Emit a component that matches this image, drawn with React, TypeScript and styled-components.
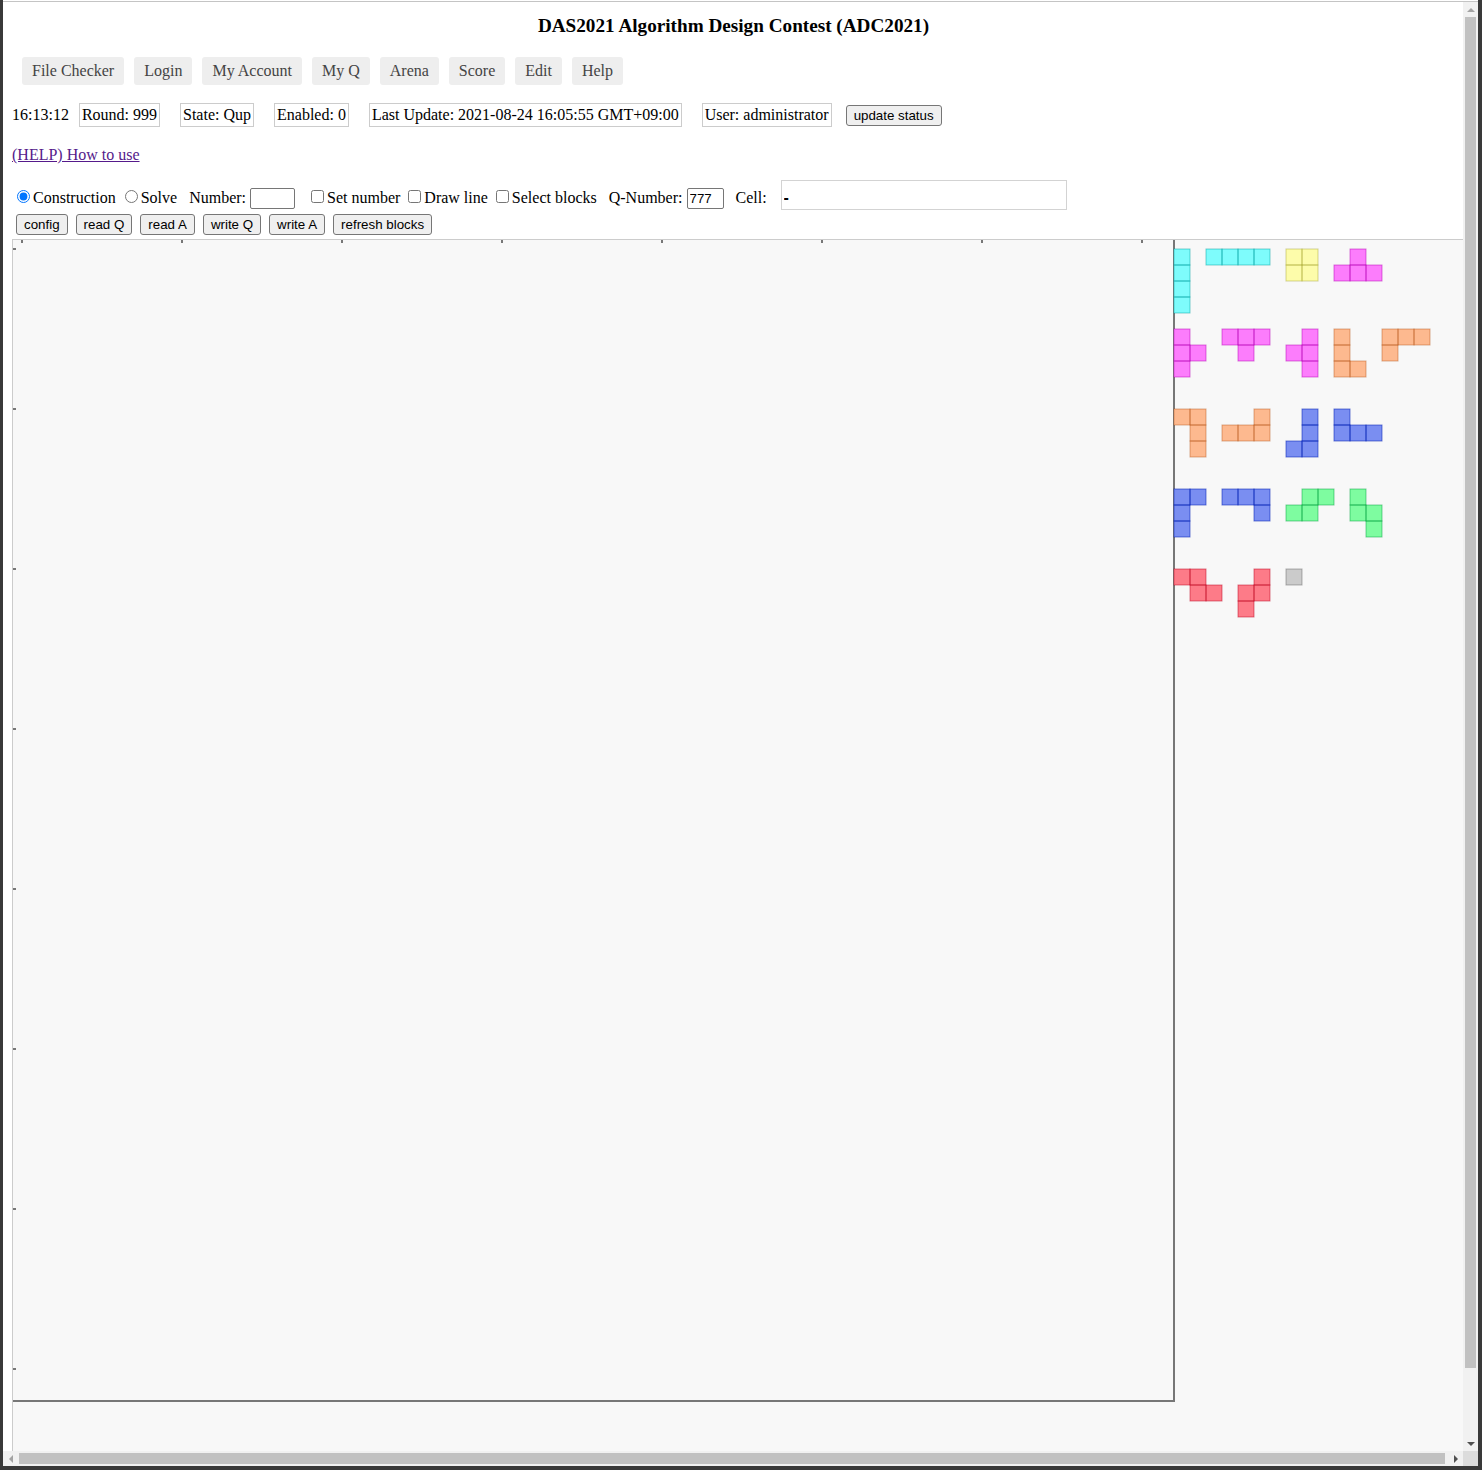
import React from "react";
import styled, { createGlobalStyle } from "styled-components";

const GlobalStyle = createGlobalStyle`
  html, body {
    margin: 0;
    padding: 0;
    overflow: hidden;
    background: #393939;
  }
  #root {
    width: 1482px;
    height: 1470px;
  }
`;

const Frame = styled.div`
  margin-left: 3px;
  width: 1475px;
  height: 1466px;
  padding-top: 1px;
  box-sizing: border-box;
  background: #ffffff;
`;

const Window = styled.div`
  height: 1465px;
  box-sizing: border-box;
  border-top: 1px solid #c4c4c4;
  display: grid;
  grid-template-columns: 1460px 15px;
  grid-template-rows: 1449px 15px;
`;

const Viewport = styled.div`
  overflow: hidden;
  background: #ffffff;
  font-family: "Liberation Serif", "Times New Roman", serif;
  font-size: 16px;
  color: #000;
`;

const VBar = styled.div`
  background: #f1f1f1;
  display: flex;
  flex-direction: column;
`;

const HBar = styled.div`
  background: #f1f1f1;
  display: flex;
  flex-direction: row;
`;

const Corner = styled.div`
  background: #dcdcdc;
`;

const ArrowBox = styled.div`
  flex: none;
  width: 15px;
  height: 15px;
  display: flex;
  align-items: center;
  justify-content: center;
`;

const VThumb = styled.div`
  flex: none;
  margin: 0 2px;
  height: 1351px;
  background: #c1c1c1;
`;

const HThumb = styled.div`
  flex: none;
  margin: 2px 0 2px 1px;
  width: 1426px;
  background: #c1c1c1;
`;

const Fill = styled.div`
  flex: 1;
`;

type Dir = "up" | "down" | "left" | "right";

const arrowPoints: Record<Dir, string> = {
  up: "0,4 4,0 8,4",
  down: "0,0 8,0 4,4",
  left: "4,0 4,8 0,4",
  right: "0,0 4,4 0,8",
};

const Arrow: React.FC<{ dir: Dir; color: string }> = ({ dir, color }) => {
  const vertical = dir === "up" || dir === "down";
  const w = vertical ? 8 : 4;
  const h = vertical ? 4 : 8;
  return (
    <ArrowBox>
      <svg width={w} height={h} viewBox={`0 0 ${w} ${h}`}>
        <polygon points={arrowPoints[dir]} fill={color} />
      </svg>
    </ArrowBox>
  );
};

const Page = styled.div`
  padding: 8px 8px 8px 9px;
`;

const Title = styled.div`
  margin-top: 5px;
  text-align: center;
  font-weight: bold;
  font-size: 19.2px;
  line-height: 22px;
`;

const Nav = styled.nav`
  display: flex;
  gap: 10px;
  margin-top: 20px;
  padding-left: 10px;
`;

const NavItem = styled.a`
  display: block;
  padding: 5px 10px;
  line-height: 18px;
  background: #eeeeee;
  color: #444444;
  border-radius: 3px;
  text-decoration: none;
`;

const StatusRow = styled.div`
  display: flex;
  align-items: center;
  margin-top: 18px;
  line-height: 18px;
`;

const Clock = styled.span`
  display: block;
`;

const StatusBox = styled.span<{ $ml: number }>`
  display: block;
  margin-left: ${(p) => p.$ml}px;
  padding: 2px 2px;
  border: 1px solid #cccccc;
`;

const Button = styled.button<{ $ml?: number }>`
  margin: 0 0 0 ${(p) => p.$ml ?? 0}px;
  font-family: "Liberation Sans", Arial, sans-serif;
  font-size: 13.33px;
  line-height: 17px;
  padding: 1px 7px;
  border: 1px solid #767676;
  border-radius: 3px;
  background: #efefef;
  color: #000;
`;

const HelpLink = styled.a`
  display: block;
  width: max-content;
  margin-top: 19px;
  line-height: 18px;
  color: #551a8b;
  text-decoration: underline;
`;

const ControlRow = styled.div`
  display: flex;
  align-items: baseline;
  margin-top: 16px;
  line-height: 18px;
  white-space: nowrap;
`;

const Text = styled.span<{ $ml?: number }>`
  display: block;
  margin-left: ${(p) => p.$ml ?? 0}px;
`;

const Toggle = styled.input<{ $ml: number }>`
  width: 13px;
  height: 13px;
  margin: 0 3px 0 ${(p) => p.$ml}px;
`;

const SmallInput = styled.input<{ $ml: number; $w: number }>`
  margin: 0 0 0 ${(p) => p.$ml}px;
  width: ${(p) => p.$w}px;
  height: 21px;
  box-sizing: border-box;
  padding: 1px 2px;
  border: 1px solid #767676;
  border-radius: 2px;
  font-family: "Liberation Sans", Arial, sans-serif;
  font-size: 13.33px;
  color: #000;
  background: #fff;
`;

const CellInput = styled.input`
  margin: 0 0 0 14px;
  width: 286px;
  height: 30px;
  box-sizing: border-box;
  padding: 5px 2px 0 2px;
  border: 1px solid #d3d3d3;
  font-family: "Liberation Sans", Arial, sans-serif;
  font-size: 16px;
  font-weight: bold;
  color: #000;
  background: #fff;
  outline: none;
`;

const ButtonRow = styled.div`
  display: flex;
  gap: 8px;
  margin-top: 4px;
  padding-left: 4px;
`;

const Board = styled.svg`
  display: block;
  margin-top: 4px;
  border-top: 1px solid #cccccc;
  border-left: 1px solid #cccccc;
  background: #f8f8f8;
`;

type Piece = { color: string; stroke: string; cells: [number, number][] };

const C = { f: "#7efcfc", s: "rgba(0,160,160,0.5)" };
const Y = { f: "#fdfcaa", s: "rgba(160,160,40,0.45)" };
const M = { f: "#fc7dfc", s: "rgba(180,0,180,0.5)" };
const O = { f: "#fdb98f", s: "rgba(180,80,20,0.45)" };
const B = { f: "#7a8ef1", s: "rgba(0,30,180,0.55)" };
const G = { f: "#7efca0", s: "rgba(0,160,60,0.5)" };
const R = { f: "#fd7b88", s: "rgba(190,0,30,0.5)" };
const N = { f: "#cbcbcb", s: "rgba(90,90,90,0.45)" };

const mk = (c: { f: string; s: string }, cells: [number, number][]): Piece => ({
  color: c.f,
  stroke: c.s,
  cells,
});

const pieces: Piece[] = [
  mk(C, [[0, 0], [0, 1], [0, 2], [0, 3]]),
  mk(C, [[2, 0], [3, 0], [4, 0], [5, 0]]),
  mk(Y, [[7, 0], [8, 0], [7, 1], [8, 1]]),
  mk(M, [[11, 0], [10, 1], [11, 1], [12, 1]]),
  mk(M, [[0, 5], [0, 6], [0, 7], [1, 6]]),
  mk(M, [[3, 5], [4, 5], [5, 5], [4, 6]]),
  mk(M, [[8, 5], [8, 6], [8, 7], [7, 6]]),
  mk(O, [[10, 5], [10, 6], [10, 7], [11, 7]]),
  mk(O, [[13, 5], [14, 5], [15, 5], [13, 6]]),
  mk(O, [[0, 10], [1, 10], [1, 11], [1, 12]]),
  mk(O, [[3, 11], [4, 11], [5, 11], [5, 10]]),
  mk(B, [[8, 10], [8, 11], [8, 12], [7, 12]]),
  mk(B, [[10, 10], [10, 11], [11, 11], [12, 11]]),
  mk(B, [[0, 15], [1, 15], [0, 16], [0, 17]]),
  mk(B, [[3, 15], [4, 15], [5, 15], [5, 16]]),
  mk(G, [[8, 15], [9, 15], [7, 16], [8, 16]]),
  mk(G, [[11, 15], [11, 16], [12, 16], [12, 17]]),
  mk(R, [[0, 20], [1, 20], [1, 21], [2, 21]]),
  mk(R, [[5, 20], [4, 21], [5, 21], [4, 22]]),
  mk(N, [[7, 20]]),
];

const GX = 9;
const GY = 9;
const CELL = 16;
const SIZE = 72 * CELL;
const BX = GX + SIZE;
const BY = GY;

const BoardDrawing: React.FC = () => {
  const ticks = Array.from({ length: 8 }, (_, k) => k * 160);
  return (
    <Board width={1455} height={1276} viewBox="0 0 1455 1276">
      {ticks.map((t) => (
        <line key={"t" + t} x1={GX + t} y1={0} x2={GX + t} y2={3} stroke="#777" strokeWidth={2} />
      ))}
      {ticks.map((t) => (
        <line key={"l" + t} x1={0} y1={GY + t} x2={3} y2={GY + t} stroke="#777" strokeWidth={2} />
      ))}
      <line x1={BX} y1={0} x2={BX} y2={GY + SIZE + 1} stroke="#777" strokeWidth={2} />
      <line x1={0} y1={GY + SIZE} x2={BX + 1} y2={GY + SIZE} stroke="#777" strokeWidth={2} />
      {pieces.map((p, i) => (
        <g key={"p" + i}>
          {p.cells.map(([cx, cy], j) => (
            <rect
              key={"f" + j}
              x={BX + cx * CELL}
              y={BY + cy * CELL}
              width={CELL}
              height={CELL}
              fill={p.color}
            />
          ))}
          {p.cells.map(([cx, cy], j) => (
            <rect
              key={"s" + j}
              x={BX + cx * CELL}
              y={BY + cy * CELL}
              width={CELL}
              height={CELL}
              fill="none"
              stroke={p.stroke}
              strokeWidth={1}
            />
          ))}
        </g>
      ))}
    </Board>
  );
};

export default function App() {
  return (
    <>
      <GlobalStyle />
      <Frame>
        <Window>
          <Viewport>
            <Page>
              <Title>DAS2021 Algorithm Design Contest (ADC2021)</Title>
              <Nav>
                <NavItem>File Checker</NavItem>
                <NavItem>Login</NavItem>
                <NavItem>My Account</NavItem>
                <NavItem>My Q</NavItem>
                <NavItem>Arena</NavItem>
                <NavItem>Score</NavItem>
                <NavItem>Edit</NavItem>
                <NavItem>Help</NavItem>
              </Nav>
              <StatusRow>
                <Clock>16:13:12</Clock>
                <StatusBox $ml={10}>Round: 999</StatusBox>
                <StatusBox $ml={20}>State: Qup</StatusBox>
                <StatusBox $ml={20}>Enabled: 0</StatusBox>
                <StatusBox $ml={20}>Last Update: 2021-08-24 16:05:55 GMT+09:00</StatusBox>
                <StatusBox $ml={20}>User: administrator</StatusBox>
                <Button $ml={14}>update status</Button>
              </StatusRow>
              <HelpLink href="#">(HELP) How to use</HelpLink>
              <ControlRow>
                <Toggle type="radio" name="mode" defaultChecked $ml={5} />
                <Text>Construction</Text>
                <Toggle type="radio" name="mode" $ml={9} />
                <Text>Solve</Text>
                <Text $ml={12}>Number:</Text>
                <SmallInput type="text" $ml={4} $w={45} />
                <Toggle type="checkbox" $ml={16} />
                <Text>Set number</Text>
                <Toggle type="checkbox" $ml={8} />
                <Text>Draw line</Text>
                <Toggle type="checkbox" $ml={8} />
                <Text>Select blocks</Text>
                <Text $ml={12}>Q-Number:</Text>
                <SmallInput type="text" defaultValue="777" $ml={4} $w={37} />
                <Text $ml={12}>Cell:</Text>
                <CellInput type="text" defaultValue="-" readOnly />
              </ControlRow>
              <ButtonRow>
                <Button>config</Button>
                <Button>read Q</Button>
                <Button>read A</Button>
                <Button>write Q</Button>
                <Button>write A</Button>
                <Button>refresh blocks</Button>
              </ButtonRow>
              <BoardDrawing />
            </Page>
          </Viewport>
          <VBar>
            <Arrow dir="up" color="#a3a3a3" />
            <VThumb />
            <Fill />
            <Arrow dir="down" color="#505050" />
          </VBar>
          <HBar>
            <Arrow dir="left" color="#a3a3a3" />
            <HThumb />
            <Fill />
            <Arrow dir="right" color="#505050" />
          </HBar>
          <Corner />
        </Window>
      </Frame>
    </>
  );
}
